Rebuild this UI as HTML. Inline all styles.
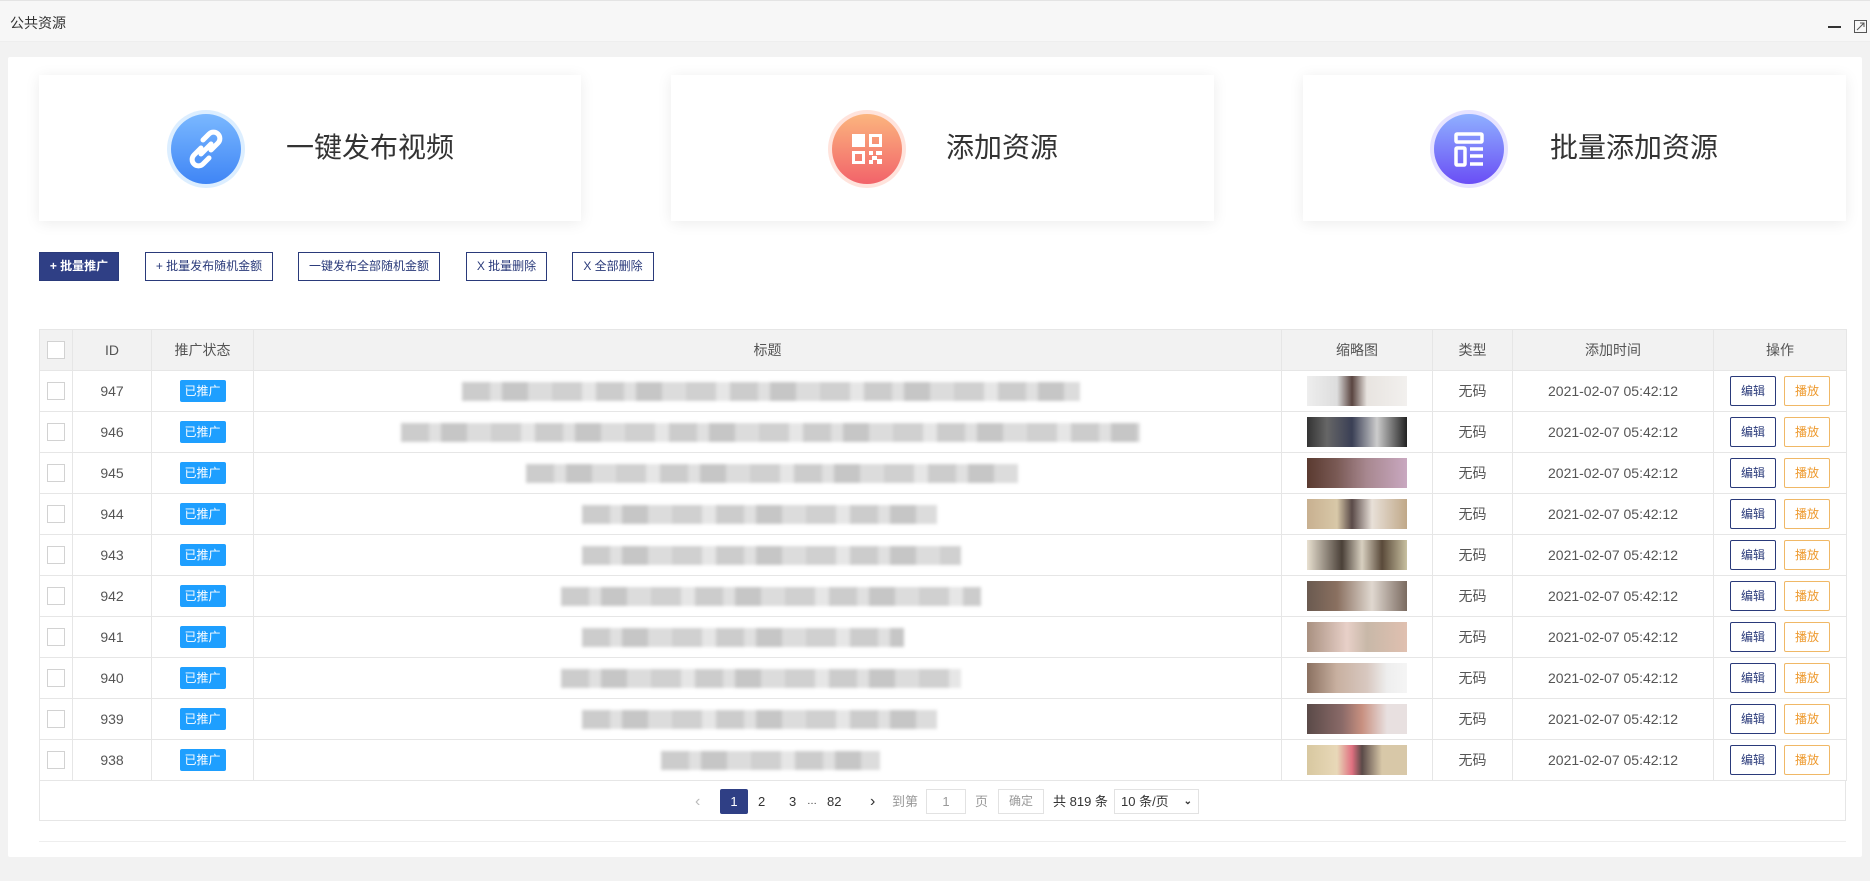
<!DOCTYPE html>
<html><head><meta charset="utf-8"><style>
*{box-sizing:border-box;margin:0;padding:0}
body{width:1870px;height:881px;background:#f2f2f2;font-family:"Liberation Sans","Noto Sans CJK SC",sans-serif;color:#555;position:relative;overflow:hidden;font-size:14px}
.top{position:absolute;left:0;top:0;width:1870px;height:42px;background:#f7f7f7;border-top:1px solid #e4e4e4;border-bottom:1px solid #eee}
.top .t{position:absolute;left:10px;top:12px;font-size:14px;color:#333}
.panel{position:absolute;left:8px;top:57px;width:1854px;height:800px;background:#fff;border-radius:2px}
.card{position:absolute;top:75px;height:146px;background:#fff;box-shadow:0 2px 14px rgba(0,0,0,.08)}
.circ{position:absolute;width:78px;height:78px;border-radius:50%;top:35px}
.circ svg{position:absolute;left:0;top:0}
.ct{position:absolute;top:53px;font-size:28px;color:#333;line-height:40px;top:53px}
.btn{position:absolute;top:252px;height:29px;border:1px solid #2a3a7a;font-size:12px;color:#2a3a7a;line-height:27px;text-align:center;background:#fff}
.btn.p{background:#2f3f85;color:#fff;font-weight:bold}
table{position:absolute;left:39px;top:329px;width:1807px;border-collapse:collapse;table-layout:fixed}
td,th{border:1px solid #e6e6e6;height:40px;text-align:center;font-size:14px;color:#555;font-weight:normal;padding:0}
th{background:#f2f2f2;height:41px}
.cb{display:inline-block;width:18px;height:18px;border:1px solid #d2d2d2;background:#fff;vertical-align:middle}
.bd{display:inline-block;width:46px;height:22px;line-height:22px;background:#1e9fff;color:#fff;font-size:12px;border-radius:2px}
.bl{position:relative;height:40px}
.bl i{position:absolute;top:11px;height:19px;filter:blur(1.5px);background:repeating-linear-gradient(90deg,#ccc 0 28px,#e0e0e0 28px 40px,#c6c6c6 40px 66px,#dcdcdc 66px 90px,#d0d0d0 90px 120px,#e6e6e6 120px 134px)}
.th{display:inline-block;width:100px;height:30px;vertical-align:middle}
.e,.pl{display:inline-block;width:46px;height:30px;line-height:28px;font-size:12px;border:1px solid #2a3a7a;color:#2a3a7a;border-radius:2px;vertical-align:middle}
.pl{border-color:#f0b866;color:#ee9a2e;margin-left:8px}
.pg{position:absolute;left:39px;top:781px;width:1807px;height:40px;border:1px solid #e6e6e6;border-top:none}
.pg span{position:absolute;top:8px;font-size:13px;line-height:25px;color:#333}
</style></head><body>
<div class="top"><div class="t">公共资源</div>
<svg style="position:absolute;left:1826px;top:18px" width="42" height="16"><line x1="2" y1="8" x2="15" y2="8" stroke="#333" stroke-width="2"/><rect x="28.5" y="1.5" width="12" height="12" fill="none" stroke="#555"/><path d="M31 11 L38 4 M34 4 H38 V8" stroke="#555" fill="none"/></svg></div>
<div class="panel"></div>

<div class="card" style="left:39px;width:542px"><div class="circ" style="left:128px;background:#dceeff">
<svg width="78" height="78"><defs><linearGradient id="g1" x1="0" y1="0" x2="0" y2="1"><stop offset="0" stop-color="#7ab8ff"/><stop offset="1" stop-color="#3f85f5"/></linearGradient></defs><circle cx="39" cy="39" r="35" fill="url(#g1)"/><g fill="none" stroke="#fff" stroke-width="5" stroke-linecap="round"><path d="M36 30 l6-6 a6 6 0 0 1 9 9 l-7 7"/><path d="M42 48 l-6 6 a6 6 0 0 1 -9 -9 l7 -7"/><path d="M34 44 l10-10"/></g></svg></div><div class="ct" style="left:247px">一键发布视频</div></div>

<div class="card" style="left:671px;width:543px"><div class="circ" style="left:157px;background:#ffe3dc">
<svg width="78" height="78"><defs><linearGradient id="g2" x1="0" y1="0" x2="0" y2="1"><stop offset="0" stop-color="#fbb57e"/><stop offset="1" stop-color="#f2636a"/></linearGradient></defs><circle cx="39" cy="39" r="35" fill="url(#g2)"/><g fill="#fff"><rect x="24" y="24" width="13" height="13"/><path d="M41 24h13v13h-13z M44 27v7h7v-7z" fill-rule="evenodd"/><path d="M24 41h13v13h-13z M27 44v7h7v-7z" fill-rule="evenodd"/><rect x="41" y="41" width="4" height="4"/><rect x="48" y="41" width="6" height="4"/><rect x="44" y="46" width="5" height="4"/><rect x="41" y="50" width="4" height="4"/><rect x="49" y="49" width="5" height="5"/></g></svg></div><div class="ct" style="left:275px">添加资源</div></div>

<div class="card" style="left:1303px;width:543px"><div class="circ" style="left:127px;background:#e7e3ff">
<svg width="78" height="78"><defs><linearGradient id="g3" x1="0" y1="0" x2="0" y2="1"><stop offset="0" stop-color="#8fb0ff"/><stop offset="1" stop-color="#6a4ef5"/></linearGradient></defs><circle cx="39" cy="39" r="35" fill="url(#g3)"/><g fill="none" stroke="#fff" stroke-width="3.5"><rect x="26" y="24" width="26" height="8" rx="1"/><rect x="26" y="38" width="9" height="17" rx="1"/><path d="M40 39h13 M40 46h13 M40 54h13"/></g></svg></div><div class="ct" style="left:247px">批量添加资源</div></div>

<div class="btn p" style="left:39px;width:80px">+ 批量推广</div>
<div class="btn" style="left:145px;width:128px">+ 批量发布随机金额</div>
<div class="btn" style="left:298px;width:142px">一键发布全部随机金额</div>
<div class="btn" style="left:466px;width:81px">X 批量删除</div>
<div class="btn" style="left:572px;width:82px">X 全部删除</div>

<table>
<colgroup><col style="width:33px"><col style="width:79px"><col style="width:102px"><col style="width:1028px"><col style="width:151px"><col style="width:80px"><col style="width:201px"><col style="width:133px"></colgroup>
<tr><th><span class="cb"></span></th><th>ID</th><th>推广状态</th><th>标题</th><th>缩略图</th><th>类型</th><th>添加时间</th><th>操作</th></tr>
<tr><td><span class="cb"></span></td><td>947</td><td><span class="bd">已推广</span></td><td><div class="bl"><i style="left:208px;width:618px"></i></div></td><td><span class="th" style="background:linear-gradient(90deg,#eee,#ddd 30%,#5a4540 45%,#e8e4e0 60%,#f2f0ee)"></span></td><td>无码</td><td>2021-02-07 05:42:12</td><td><span class="e">编辑</span><span class="pl">播放</span></td></tr>
<tr><td><span class="cb"></span></td><td>946</td><td><span class="bd">已推广</span></td><td><div class="bl"><i style="left:147px;width:739px"></i></div></td><td><span class="th" style="background:linear-gradient(90deg,#333,#666 20%,#3a3f55 45%,#ccc 70%,#222)"></span></td><td>无码</td><td>2021-02-07 05:42:12</td><td><span class="e">编辑</span><span class="pl">播放</span></td></tr>
<tr><td><span class="cb"></span></td><td>945</td><td><span class="bd">已推广</span></td><td><div class="bl"><i style="left:272px;width:492px"></i></div></td><td><span class="th" style="background:linear-gradient(90deg,#5a3a30,#7a5a55 30%,#a88890 60%,#c9a8c0)"></span></td><td>无码</td><td>2021-02-07 05:42:12</td><td><span class="e">编辑</span><span class="pl">播放</span></td></tr>
<tr><td><span class="cb"></span></td><td>944</td><td><span class="bd">已推广</span></td><td><div class="bl"><i style="left:328px;width:355px"></i></div></td><td><span class="th" style="background:linear-gradient(90deg,#c8b090,#d8c8a8 30%,#5a4a48 45%,#e8e0d8 65%,#c0a888)"></span></td><td>无码</td><td>2021-02-07 05:42:12</td><td><span class="e">编辑</span><span class="pl">播放</span></td></tr>
<tr><td><span class="cb"></span></td><td>943</td><td><span class="bd">已推广</span></td><td><div class="bl"><i style="left:328px;width:379px"></i></div></td><td><span class="th" style="background:linear-gradient(90deg,#e8e0d0,#4a4038 35%,#d8d0c0 55%,#5a4a3a 75%,#c8c0a0)"></span></td><td>无码</td><td>2021-02-07 05:42:12</td><td><span class="e">编辑</span><span class="pl">播放</span></td></tr>
<tr><td><span class="cb"></span></td><td>942</td><td><span class="bd">已推广</span></td><td><div class="bl"><i style="left:307px;width:420px"></i></div></td><td><span class="th" style="background:linear-gradient(90deg,#6a5a50,#8a7060 30%,#e0d8d0 65%,#7a6a60)"></span></td><td>无码</td><td>2021-02-07 05:42:12</td><td><span class="e">编辑</span><span class="pl">播放</span></td></tr>
<tr><td><span class="cb"></span></td><td>941</td><td><span class="bd">已推广</span></td><td><div class="bl"><i style="left:328px;width:322px"></i></div></td><td><span class="th" style="background:linear-gradient(90deg,#a89080,#e8d0c8 40%,#c8b8a8 60%,#e0c0b0)"></span></td><td>无码</td><td>2021-02-07 05:42:12</td><td><span class="e">编辑</span><span class="pl">播放</span></td></tr>
<tr><td><span class="cb"></span></td><td>940</td><td><span class="bd">已推广</span></td><td><div class="bl"><i style="left:307px;width:400px"></i></div></td><td><span class="th" style="background:linear-gradient(90deg,#8a7060,#c8b0a0 30%,#d8c8c0 60%,#eee 80%,#f5f5f5)"></span></td><td>无码</td><td>2021-02-07 05:42:12</td><td><span class="e">编辑</span><span class="pl">播放</span></td></tr>
<tr><td><span class="cb"></span></td><td>939</td><td><span class="bd">已推广</span></td><td><div class="bl"><i style="left:328px;width:355px"></i></div></td><td><span class="th" style="background:linear-gradient(90deg,#5a4a48,#8a6a68 35%,#c89080 55%,#e8e0e0 80%)"></span></td><td>无码</td><td>2021-02-07 05:42:12</td><td><span class="e">编辑</span><span class="pl">播放</span></td></tr>
<tr><td><span class="cb"></span></td><td>938</td><td><span class="bd">已推广</span></td><td><div class="bl"><i style="left:407px;width:219px"></i></div></td><td><span class="th" style="background:linear-gradient(90deg,#d8c8a0,#e8d8b8 30%,#e07080 45%,#5a4a48 55%,#d8c8a8 75%)"></span></td><td>无码</td><td>2021-02-07 05:42:12</td><td><span class="e">编辑</span><span class="pl">播放</span></td></tr>
</table>
<div class="pg">
<span style="left:655px;color:#bbb;font-size:16px">&lsaquo;</span>
<span style="left:680px;width:28px;height:25px;background:#2f3f85;color:#fff;text-align:center;border-radius:2px">1</span>
<span style="left:718px">2</span>
<span style="left:749px">3</span><span style="left:767px;font-size:10px">…</span>
<span style="left:787px">82</span>
<span style="left:830px;font-size:16px">&rsaquo;</span>
<span style="left:852px;color:#999">到第</span>
<span style="left:886px;width:40px;height:25px;border:1px solid #e2e2e2;text-align:center;color:#999;line-height:23px">1</span>
<span style="left:935px;color:#999">页</span>
<span style="left:958px;width:46px;height:25px;border:1px solid #e2e2e2;text-align:center;color:#999;font-size:12px;line-height:23px">确定</span>
<span style="left:1013px">共 819 条</span>
<span style="left:1074px;width:85px;height:25px;border:1px solid #e2e2e2;padding-left:6px;line-height:23px">10 条/页 <b style="position:absolute;right:6px;font-size:10px">&#8964;</b></span>
</div>
<div style="position:absolute;left:39px;top:841px;width:1807px;border-top:1px solid #eee"></div>
</body></html>
